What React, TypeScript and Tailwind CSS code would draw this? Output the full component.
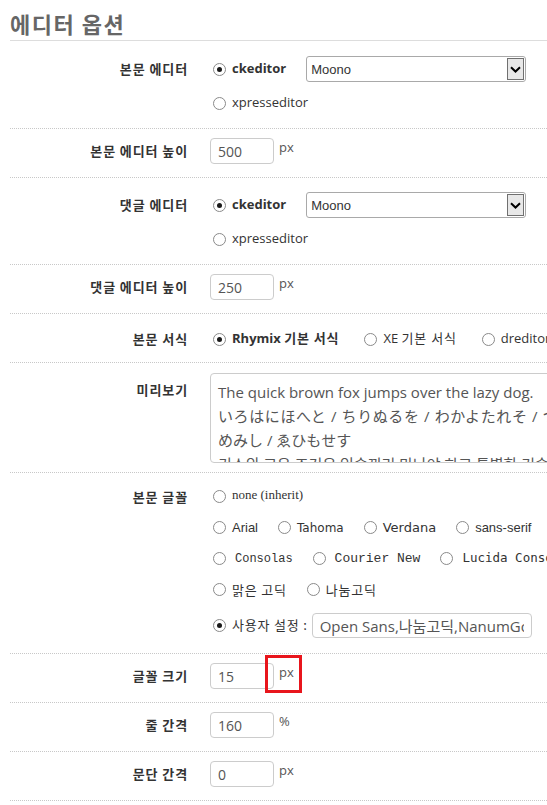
import type { ReactNode } from "react";

const ui = "font-['Open_Sans','Noto_Sans_CJK_KR',sans-serif]";
const kr = "font-['Noto_Sans_CJK_KR',sans-serif] tracking-[0.8px]";

function Radio({ checked }: { checked?: boolean }) {
  return (
    <span className="ml-[3px] mr-[6px] flex h-[13px] w-[13px] shrink-0 items-center justify-center rounded-full border border-[#8a8a8a] bg-white">
      {checked && <span className="h-[5px] w-[5px] rounded-full bg-[#1a1a1a]" />}
    </span>
  );
}

function Option({
  checked,
  children,
  className = "",
}: {
  checked?: boolean;
  children: ReactNode;
  className?: string;
}) {
  return (
    <label className={"flex items-center whitespace-nowrap " + className}>
      <Radio checked={checked} />
      {children}
    </label>
  );
}

function Row({
  label,
  children,
  rowClass,
  labelClass = "",
}: {
  label: string;
  children: ReactNode;
  rowClass: string;
  labelClass?: string;
}) {
  return (
    <div className={"relative ml-[10px] flex border-b border-dotted border-[#c8c8c8] " + rowClass}>
      <div
        className={
          "h-[26px] w-[178px] shrink-0 text-right text-[13px] font-bold leading-[26px] tracking-[0.9px] text-[#333] font-['Noto_Sans_CJK_KR',sans-serif] " +
          labelClass
        }
      >
        {label}
      </div>
      <div className="ml-[22px] flex min-w-0 flex-col">{children}</div>
    </div>
  );
}

function Select() {
  return (
    <div className="ml-[20px] flex h-[26px] w-[220px] shrink-0 items-stretch rounded-[3px] border border-[#a9a9a9] bg-white p-px">
      <span className="flex-1 pl-[3px] text-[13px] leading-[23px] text-[#333] font-['Liberation_Sans',sans-serif]">
        Moono
      </span>
      <span className="flex w-[17px] items-center justify-center border border-[#707070] bg-[#e8e8e8]">
        <svg width="11" height="7" viewBox="0 0 11 7">
          <path d="M1 1.2 L5.5 5.5 L10 1.2" fill="none" stroke="#000" strokeWidth="2" />
        </svg>
      </span>
    </div>
  );
}

function NumInput({ value, unit }: { value: string; unit: string }) {
  return (
    <div className="flex h-[26px] items-start">
      <input
        readOnly
        value={value}
        className={"h-[26px] w-[64px] rounded-[4px] border border-[#ccc] bg-white px-[7px] text-[14px] text-[#555] outline-none " + ui}
      />
      <span className={"ml-[5px] pt-[3px] text-[13px] leading-[13px] text-[#555] " + ui}>{unit}</span>
    </div>
  );
}

export default function App() {
  return (
    <div className="min-h-screen w-full overflow-hidden bg-white text-[#333]">
      <div className="ml-[10px] border-b border-[#ddd] pb-[6px] pt-[12px]">
        <h1 className="text-[22px] font-bold leading-[22px] tracking-[1.5px] text-[#666] font-['Noto_Sans_CJK_KR',sans-serif]">
          에디터 옵션
        </h1>
      </div>

      <Row label="본문 에디터" rowClass="pt-[15px] pb-[12px]">
        <div className={"flex h-[26px] items-center text-[13px] " + ui}>
          <Option checked className="font-bold">ckeditor</Option>
          <Select />
        </div>
        <div className={"mt-[8px] flex h-[26px] items-center text-[13px] " + ui}>
          <Option>xpresseditor</Option>
        </div>
      </Row>

      <Row label="본문 에디터 높이" rowClass="pt-[9px] pb-[13px]">
        <NumInput value="500" unit="px" />
      </Row>

      <Row label="댓글 에디터" rowClass="pt-[14px] pb-[12px]">
        <div className={"flex h-[26px] items-center text-[13px] " + ui}>
          <Option checked className="font-bold">ckeditor</Option>
          <Select />
        </div>
        <div className={"mt-[8px] flex h-[26px] items-center text-[13px] " + ui}>
          <Option>xpresseditor</Option>
        </div>
      </Row>

      <Row label="댓글 에디터 높이" rowClass="pt-[9px] pb-[13px]">
        <NumInput value="250" unit="px" />
      </Row>

      <Row label="본문 서식" rowClass="pt-[12px] pb-[10px]">
        <div className={"flex h-[26px] items-center gap-[22px] text-[13px] " + ui}>
          <Option checked className="font-bold">
            <span>
              Rhymix <span className="tracking-[0.8px]">기본 서식</span>
            </span>
          </Option>
          <Option>
            <span>
              XE <span className="tracking-[0.8px]">기본 서식</span>
            </span>
          </Option>
          <Option>dreditor</Option>
        </div>
      </Row>

      <Row label="미리보기" rowClass="pt-[10px] pb-[9px]" labelClass="mt-[4px]">
        <div className="h-[90px] w-[780px] shrink-0 overflow-hidden rounded-[4px] border border-[#ccc] px-[7px] pt-[6px] text-[15px] leading-[24px] text-[#555] font-['Open_Sans','Noto_Sans_CJK_JP','Noto_Sans_CJK_KR',sans-serif]">
          <p className="whitespace-nowrap">The quick brown fox jumps over the lazy dog.</p>
          <p className="whitespace-nowrap tracking-[0.6px]">
            いろはにほへと / ちりぬるを / わかよたれそ / つねならむ / うゐのおくやま / けふこえて / あさきゆ
          </p>
          <p className="whitespace-nowrap">めみし / ゑひもせす</p>
          <p className="whitespace-nowrap font-['Open_Sans','Noto_Sans_CJK_KR',sans-serif]">
            키스의 고유 조건은 입술끼리 만나야 하고 특별한 기술은 필요치 않다.
          </p>
        </div>
      </Row>

      <Row label="본문 글꼴" rowClass="pt-[8px] pb-[8px]" labelClass="mt-[3px]">
        <div className="flex h-[31px] items-center text-[13px]">
          <Option className="font-['Liberation_Serif',serif]">
            <span className="-mt-[4px]">none (inherit)</span>
          </Option>
        </div>
        <div className="flex h-[31px] items-center gap-[17px] text-[13px]">
          <Option className="font-['Liberation_Sans',sans-serif]">Arial</Option>
          <Option className="font-['DejaVu_Sans',sans-serif] text-[12px]">Tahoma</Option>
          <Option className="font-['DejaVu_Sans',sans-serif]">Verdana</Option>
          <Option className="font-['Liberation_Sans',sans-serif]">sans-serif</Option>
        </div>
        <div className="flex h-[31px] items-center gap-[17px] text-[13px]">
          <Option className="font-['Liberation_Mono',monospace] text-[12px]">
            <span className="ml-[3px]">Consolas</span>
          </Option>
          <Option className="font-['Liberation_Mono',monospace]">
            <span className="ml-[3px]">Courier New</span>
          </Option>
          <Option className="font-['DejaVu_Sans_Mono',monospace] text-[12.5px]">
            <span className="ml-[3px]">Lucida Console</span>
          </Option>
        </div>
        <div className={"flex h-[31px] items-center gap-[17px] text-[13px] " + kr}>
          <Option>맑은 고딕</Option>
          <Option>나눔고딕</Option>
        </div>
        <div className={"flex h-[40px] items-center text-[13px] " + kr}>
          <Option checked>사용자 설정 :</Option>
          <input
            readOnly
            value="Open Sans,나눔고딕,NanumGothic,맑은 고딕,Malgun Gothic,sans-serif"
            className={"ml-[4px] h-[25px] w-[220px] rounded-[4px] border border-[#ccc] bg-white px-[7px] text-[15px] tracking-normal text-[#555] outline-none " + ui}
          />
        </div>
      </Row>

      <Row label="글꼴 크기" rowClass="pt-[9px] pb-[13px]">
        <NumInput value="15" unit="px" />
        <span className="absolute left-[255px] top-[1px] h-[38px] w-[37px] border-[3px] border-[#e8151c]" />
      </Row>

      <Row label="줄 간격" rowClass="pt-[9px] pb-[13px]">
        <NumInput value="160" unit="%" />
      </Row>

      <Row label="문단 간격" rowClass="pt-[9px] pb-[13px]">
        <NumInput value="0" unit="px" />
      </Row>
    </div>
  );
}
